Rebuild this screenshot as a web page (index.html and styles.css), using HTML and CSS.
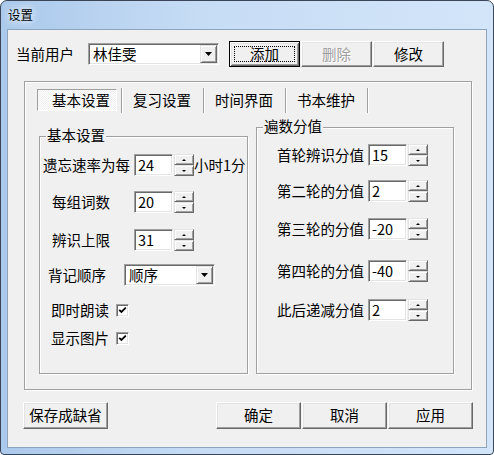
FILE: index.html
```html
<!DOCTYPE html>
<html lang="zh-CN">
<head>
  <meta charset="UTF-8">
  <title>设置</title>
  <link rel="stylesheet" href="styles.css">
</head>
<body>
<div class="window">
  <div class="titleBar"><span class="title">设置</span></div>

  <div class="client">
    <!-- user row -->
    <div class="userRow">
      <span class="userLabel">当前用户</span>
      <div class="combo userCombo">
        <span class="comboText">林佳雯</span>
        <span class="comboBtn"><svg width="7" height="4" viewBox="0 0 7 4"><path d="M0 0h7L3.5 4z"/></svg></span>
      </div>
      <div class="userBtns">
        <button class="btn userBtn btnDefault"><span class="focusRect">添加</span></button>
        <button class="btn userBtn" disabled>删除</button>
        <button class="btn userBtn">修改</button>
      </div>
    </div>

    <!-- tabs -->
    <div class="tabPanel">
      <div class="tabs">
        <span class="tab active">基本设置</span>
        <span class="tabSep"></span>
        <span class="tab">复习设置</span>
        <span class="tabSep"></span>
        <span class="tab">时间界面</span>
        <span class="tabSep"></span>
        <span class="tab">书本维护</span>
        <span class="tabSep"></span>
      </div>

      <div class="groups">
        <div class="group basicGroup">
          <span class="groupTitle">基本设置</span>
          <div class="basicRows">
            <div class="row rowFirst">
              <span class="lbl">遗忘速率为每</span>
              <div class="spin">
                <span class="edit">24</span>
                <span class="spinBtns"><span class="spinBtn"><i class="up"></i></span><span class="spinBtn"><i class="down"></i></span></span>
              </div>
              <span class="unit">小时1分</span>
            </div>
            <div class="row rowNum">
              <span class="lbl">每组词数</span>
              <div class="spin">
                <span class="edit">20</span>
                <span class="spinBtns"><span class="spinBtn"><i class="up"></i></span><span class="spinBtn"><i class="down"></i></span></span>
              </div>
            </div>
            <div class="row rowNum">
              <span class="lbl">辨识上限</span>
              <div class="spin">
                <span class="edit">31</span>
                <span class="spinBtns"><span class="spinBtn"><i class="up"></i></span><span class="spinBtn"><i class="down"></i></span></span>
              </div>
            </div>
            <div class="row rowOrder">
              <span class="lbl">背记顺序</span>
              <div class="combo orderCombo">
                <span class="comboText">顺序</span>
                <span class="comboBtn"><svg width="7" height="4" viewBox="0 0 7 4"><path d="M0 0h7L3.5 4z"/></svg></span>
              </div>
            </div>
            <div class="row rowCheck">
              <span class="lbl">即时朗读</span>
              <span class="check"><svg width="9" height="9" viewBox="0 0 9 9"><path d="M1.2 3.8L3.4 6 7.8 1.6" fill="none" stroke="#000" stroke-width="1.8"/></svg></span>
            </div>
            <div class="row rowCheck">
              <span class="lbl">显示图片</span>
              <span class="check"><svg width="9" height="9" viewBox="0 0 9 9"><path d="M1.2 3.8L3.4 6 7.8 1.6" fill="none" stroke="#000" stroke-width="1.8"/></svg></span>
            </div>
          </div>
        </div>

        <div class="group scoreGroup">
          <span class="groupTitle">遍数分值</span>
          <div class="scoreRows">
            <div class="row scoreRow">
              <span class="lbl">首轮辨识分值</span>
              <div class="spin">
                <span class="edit">15</span>
                <span class="spinBtns"><span class="spinBtn"><i class="up"></i></span><span class="spinBtn"><i class="down"></i></span></span>
              </div>
            </div>
            <div class="row scoreRow">
              <span class="lbl">第二轮的分值</span>
              <div class="spin">
                <span class="edit">2</span>
                <span class="spinBtns"><span class="spinBtn"><i class="up"></i></span><span class="spinBtn"><i class="down"></i></span></span>
              </div>
            </div>
            <div class="row scoreRow">
              <span class="lbl">第三轮的分值</span>
              <div class="spin">
                <span class="edit">-20</span>
                <span class="spinBtns"><span class="spinBtn"><i class="up"></i></span><span class="spinBtn"><i class="down"></i></span></span>
              </div>
            </div>
            <div class="row scoreRow">
              <span class="lbl">第四轮的分值</span>
              <div class="spin">
                <span class="edit">-40</span>
                <span class="spinBtns"><span class="spinBtn"><i class="up"></i></span><span class="spinBtn"><i class="down"></i></span></span>
              </div>
            </div>
            <div class="row scoreRow">
              <span class="lbl">此后递减分值</span>
              <div class="spin">
                <span class="edit">2</span>
                <span class="spinBtns"><span class="spinBtn"><i class="up"></i></span><span class="spinBtn"><i class="down"></i></span></span>
              </div>
            </div>
          </div>
        </div>
      </div>
    </div>

    <!-- bottom buttons -->
    <div class="bottomRow">
      <button class="btn wideBtn">保存成缺省</button>
      <div class="okBtns">
        <button class="btn wideBtn">确定</button>
        <button class="btn wideBtn">取消</button>
        <button class="btn wideBtn">应用</button>
      </div>
    </div>
  </div>
</div>
</body>
</html>
```

FILE: styles.css
```css
*{box-sizing:border-box}
html,body{margin:0;padding:0}
body{font-family:"Noto Sans CJK SC","Liberation Sans",sans-serif;font-size:14.5px;color:#000;background:#fff}

/* window frame */
.window{width:494px;height:455px;border:1px solid #3a4658;border-radius:7px 7px 4px 4px;
        padding:0 6px 6px;display:flex;flex-direction:column;
        background:linear-gradient(90deg,#abc9eb 0,#c6dcf5 40%,#d3e5f9 100%)}
.titleBar{height:28px;display:flex;align-items:center;padding-left:1px}
.title{font-size:12.5px;line-height:1;text-shadow:0 0 6px #fff,0 0 10px #e8f2fd}
.client{height:419px;border:1px solid #8ea3bd;background:#f0f0f0}

/* classic 3d controls */
.btn{font:inherit;color:#000;background:#f0f0f0;margin:0;padding:0;line-height:1;
     border:1px solid;border-color:#fff #696969 #696969 #fff;
     box-shadow:inset -1px -1px 0 #a0a0a0,inset 1px 1px 0 #e3e3e3;
     display:flex;align-items:center;justify-content:center}
.btn:disabled{color:#a0a0a0;text-shadow:1px 1px 0 #fff}
.btnDefault{border:1px solid #000;
            box-shadow:inset 1px 1px 0 #fff,inset -1px -1px 0 #696969,inset 2px 2px 0 #e3e3e3,inset -2px -2px 0 #a0a0a0}
.focusRect{width:calc(100% - 8px);height:calc(100% - 8px);border:1px dotted #000;
           display:flex;align-items:center;justify-content:center}

.combo{height:22px;display:flex;align-items:center;background:#fff;
       border:1px solid;border-color:#a0a0a0 #fff #fff #a0a0a0;
       box-shadow:inset 1px 1px 0 #696969,inset -1px -1px 0 #e3e3e3;padding:1px}
.comboText{flex:1;padding-left:3px;line-height:1}
.comboBtn{width:17px;height:18px;display:flex;align-items:center;justify-content:center;background:#f0f0f0;
          border:1px solid;border-color:#e3e3e3 #696969 #696969 #e3e3e3;
          box-shadow:inset 1px 1px 0 #fff,inset -1px -1px 0 #a0a0a0}

/* top row */
.userRow{display:flex;align-items:center;height:26px;margin-top:11px;padding-left:8px}
.userLabel{width:72px;line-height:1}
.userCombo{width:131px}
.userBtns{display:flex;gap:1px;margin-left:10px}
.userBtn{width:71px;height:26px}

/* tab control */
.tabPanel{margin:14px 0 0 16px;width:448px;height:309px;padding:7px 0 0 12px;
          border:1px solid #a0a0a0;box-shadow:inset 1px 1px 0 #fff,1px 1px 0 #fff}
.tabs{display:flex;align-items:center;height:22px}
.tab{padding:0 12px 0 10px;line-height:1;white-space:nowrap}
.tab.active{width:80px;height:22px;padding-left:14px;margin-right:4px;display:flex;align-items:center;
            border:1px solid;border-color:#a0a0a0 #fff #fff #a0a0a0;
            background:repeating-conic-gradient(#fff 0 25%,#f0f0f0 0 50%) 0 0/2px 2px}
.tabSep{width:2px;height:25px;border-left:1px solid #a0a0a0;border-right:1px solid #fff}

/* group boxes */
.groups{display:flex;align-items:flex-end;gap:8px;margin:16px 0 0 2px}
.group{position:relative;border:1px solid #a0a0a0;box-shadow:inset 1px 1px 0 #fff,1px 1px 0 #fff}
.groupTitle{position:absolute;top:-9px;left:6px;padding:0 1px;background:#f0f0f0;line-height:1;white-space:nowrap}
.basicGroup{width:209px;height:238px}
.scoreGroup{width:198px;height:247px}

.basicRows{display:grid;grid-template-rows:37px 38px 35px 35px 28px 22px;padding-top:17px}
.scoreRows{display:grid;grid-template-rows:36px 38px 42px 39px 22px;padding-top:16px}
.row{display:flex;align-items:center;height:22px;white-space:nowrap}
.lbl{line-height:1;flex:none}
.rowFirst{padding-left:3px}
.rowFirst .lbl{width:91px}
.rowNum{padding-left:12px}
.rowNum .lbl{width:82px}
.rowOrder{padding-left:8px}
.rowOrder .lbl{width:76px}
.rowCheck{padding-left:11px}
.rowCheck .lbl{width:65px}
.scoreRow{padding-left:20px}
.scoreRow .lbl{width:91px}
.unit{line-height:1}
.orderCombo{width:91px}

/* spin edit */
.spin{display:flex;gap:1px;height:22px}
.edit{width:39px;height:22px;display:flex;align-items:center;padding-left:3px;line-height:1;background:#fff;
      border:1px solid;border-color:#a0a0a0 #fff #fff #a0a0a0;
      box-shadow:inset 1px 1px 0 #696969,inset -1px -1px 0 #e3e3e3}
.spinBtns{display:flex;flex-direction:column;width:20px;height:22px}
.spinBtn{height:11px;display:flex;align-items:center;justify-content:center;background:#f0f0f0;
         border:1px solid;border-color:#e3e3e3 #696969 #696969 #e3e3e3;
         box-shadow:inset 1px 1px 0 #fff,inset -1px -1px 0 #a0a0a0}
.spinBtn i{width:0;height:0;border-left:2px solid transparent;border-right:2px solid transparent}
.spinBtn .up{border-bottom:2px solid #000}
.spinBtn .down{border-top:2px solid #000}

/* checkbox */
.check{width:13px;height:13px;display:flex;align-items:center;justify-content:center;background:#fff;
       border:1px solid;border-color:#a0a0a0 #fff #fff #a0a0a0;
       box-shadow:inset 1px 1px 0 #696969,inset -1px -1px 0 #e3e3e3}
.check svg{display:block}

/* bottom */
.bottomRow{display:flex;justify-content:space-between;margin-top:12px;padding:0 13px 0 15px}
.okBtns{display:flex;gap:1px}
.wideBtn{width:85px;height:27px}
```
